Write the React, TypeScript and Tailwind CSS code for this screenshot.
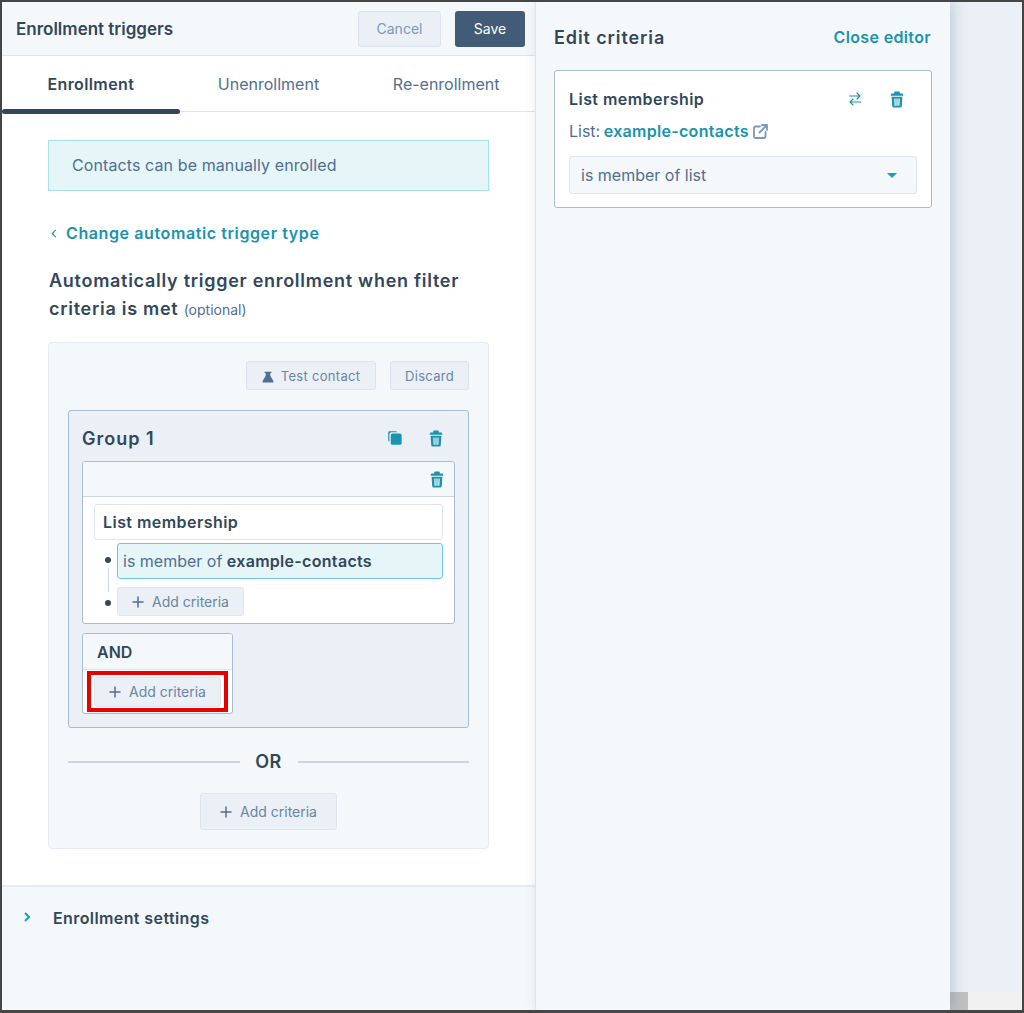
import React from 'react';

const font = { fontFamily: 'Inter' };

function TrashIcon({ className }: { className?: string }) {
  return (
    <svg viewBox="0 0 14 17" className={className} fill="currentColor">
      <path d="M5.200 0.400h3.600a1 1 0 0 1 1 1V2.400h2.400a1 1 0 0 1 1 1V4.800H0.800V3.400a1 1 0 0 1 1-1h2.400V1.400a1 1 0 0 1 1-1z" />
      <path fillRule="evenodd" d="M1.600 5.800h10.800l-0.600 9.300A1.600 1.600 0 0 1 10.200 16.600H3.800A1.600 1.600 0 0 1 2.200 15.100zM4.300 7.400l0.300 7.400h1.200L5.500 7.400zM6.400 7.400v7.400h1.200V7.400zM8.500 7.400l-0.300 7.400h1.200l0.300-7.400z" />
    </svg>
  );
}

function CopyIcon({ className }: { className?: string }) {
  return (
    <svg viewBox="0 0 14 14" className={className} fill="currentColor">
      <path d="M1.600 0.200h6.200a1.200 1.200 0 0 1 1.200 1.100H3.400A2 2 0 0 0 1.400 3.300v7.200A1.300 1.300 0 0 1 0.200 9.200V1.600A1.400 1.400 0 0 1 1.600 0.200z" />
      <rect x="2.800" y="2.400" width="10.800" height="11.400" rx="1.600" />
    </svg>
  );
}

function SwapIcon({ className }: { className?: string }) {
  return (
    <svg viewBox="0 0 14 14" className={className} fill="none" stroke="currentColor" strokeWidth="1.100" strokeLinecap="round" strokeLinejoin="round">
      <path d="M1.500 4h10.500M9 1l3 3-3 3" />
      <path d="M12.500 10H2M5 7l-3 3 3 3" />
    </svg>
  );
}

function ExternalIcon({ className }: { className?: string }) {
  return (
    <svg viewBox="0 0 15 15" className={className} fill="none" stroke="currentColor" strokeWidth="1.800" strokeLinecap="round" strokeLinejoin="round">
      <path d="M7 2.500H2.500a1.500 1.500 0 0 0-1.500 1.500v8.500A1.500 1.500 0 0 0 2.500 14H11a1.500 1.500 0 0 0 1.500-1.500V8" />
      <path d="M9 1h5v5M14 1L6.500 8.500" />
    </svg>
  );
}

function FlaskIcon({ className }: { className?: string }) {
  return (
    <svg viewBox="0 0 12 12" className={className} fill="currentColor">
      <path d="M2.500 0.800h7v1.200H8.300v2.800l3.200 5.500a0.800 0.800 0 0 1-0.700 1.200H1.200a0.800 0.800 0 0 1-0.700-1.200l3.200-5.500V2H2.500z" />
    </svg>
  );
}

function PlusIcon({ className }: { className?: string }) {
  return (
    <svg viewBox="0 0 12 12" className={className} fill="none" stroke="currentColor" strokeWidth="1.500" strokeLinecap="round">
      <path d="M6 1v10M1 6h10" />
    </svg>
  );
}

function AddCriteria({ className }: { className: string }) {
  return (
    <button className={`flex items-center justify-center gap-2 rounded-[3px] border border-[#dfe5ec] bg-[#eaf0f6] text-sm text-[#6a85a3] ${className}`}>
      <PlusIcon className="h-3 w-3 text-[#516f90]" />
      Add criteria
    </button>
  );
}

export default function App() {
  return (
    <div style={font} className="flex h-[1013px] w-[1024px] border-t-2 border-r-2 border-b-[3px] border-l-2 border-[#454545] bg-[#eaf0f6] text-[#33475b]">
      {/* left panel */}
      <div className="flex w-[533px] flex-col bg-white">
        <div className="flex h-[54px] items-center border-b border-[#dfe3eb] bg-[#f5f8fa] pr-[10px] pl-[14px]">
          <h1 className="flex-1 pt-[2px] text-[17px] font-semibold">Enrollment triggers</h1>
          <button className="mr-[14px] h-9 w-[83px] rounded-[3px] border border-[#dbe3ec] bg-[#eaf0f6] text-sm text-[#7c98b6]">Cancel</button>
          <button className="h-9 w-[70px] rounded-[3px] bg-[#425b76] text-sm text-white">Save</button>
        </div>

        <div className="grid h-[56px] grid-cols-3 border-b border-[#dfe3eb] text-base">
          <div className="relative flex items-center justify-center font-semibold tracking-[0.4px]">
            Enrollment
            <span className="absolute top-[53px] left-0 h-[5px] w-[178px] rounded-full bg-[#33475b]" />
          </div>
          <div className="flex items-center justify-center text-[#516f90]">Unenrollment</div>
          <div className="flex items-center justify-center text-[#516f90]">Re-enrollment</div>
        </div>

        <div className="flex-1 pt-7 pl-[46px]">
          <div className="flex h-[51px] w-[441px] items-center border border-[#a8e0e8] bg-[#e5f5f8] pb-px pl-[23px] text-base tracking-[0.1px] text-[#516f90]">
            Contacts can be manually enrolled
          </div>
          <div className="mt-[32px] flex items-center pl-[3px] text-base leading-5 font-semibold tracking-[0.6px] text-[#1a93ad]">
            <svg viewBox="0 0 6 10" className="mr-[9px] h-[9px] w-[6px]" fill="none" stroke="currentColor" strokeWidth="1.300">
              <path d="M5 1L1 5l4 4" />
            </svg>
            Change automatic trigger type
          </div>
          <h2 className="mt-[24px] ml-px w-[430px] text-lg leading-7 font-semibold tracking-[0.72px]">
            Automatically trigger enrollment when filter criteria is met{' '}
            <span className="text-sm font-normal tracking-[0px] text-[#516f90]">(optional)</span>
          </h2>

          <div className="mt-[19px] h-[507px] w-[441px] rounded-[4px] border border-[#e5ebf1] bg-[#f5f8fa] px-[19px] pt-[18px]">
            <div className="flex justify-end gap-[14px]">
              <button className="flex h-[29px] w-[130px] items-center justify-center gap-[7px] rounded-[3px] border border-[#dbe3ec] bg-[#eaf0f6] pt-[2px] text-[13px] tracking-[0.3px] text-[#6a85a3]">
                <FlaskIcon className="h-3 w-3 text-[#516f90]" />
                Test contact
              </button>
              <button className="h-[29px] w-[79px] rounded-[3px] border border-[#dbe3ec] bg-[#eaf0f6] pt-[2px] text-[13px] tracking-[0.3px] text-[#6a85a3]">Discard</button>
            </div>

            <div className="mt-5 h-[318px] rounded-[3px] border border-[#a9bccf] bg-[#eaf0f6] px-[13px]">
              <div className="flex h-[50px] items-center">
                <span className="flex-1 pt-[6px] text-lg font-semibold tracking-[1px]">Group 1</span>
                <CopyIcon className="mt-[4px] mr-[27px] h-[14px] w-[14px] text-[#1a93ad]" />
                <TrashIcon className="mt-[4px] mr-[12px] h-[17px] w-[14px] text-[#1a93ad]" />
              </div>
              <div className="h-[163px] overflow-hidden rounded-[3px] border border-[#a9bccf] bg-white">
                <div className="flex h-[35px] items-center justify-end border-b border-[#cbd6e2] bg-[#f5f8fa] pr-[10px]">
                  <TrashIcon className="h-[17px] w-[14px] text-[#1a93ad]" />
                </div>
                <div className="px-[11px] pt-[7px]">
                  <div className="flex h-9 items-center rounded-[3px] border border-[#dfe3eb] pl-2 text-base font-semibold tracking-[0.45px]">List membership</div>
                  <div className="mt-[3px] flex">
                    <div className="flex w-[23px] flex-col items-center pt-[14px] pl-[5px]">
                      <span className="h-[6px] w-[6px] rounded-full bg-[#33475b]" />
                      <span className="mt-[5px] mb-[8px] h-6 w-px bg-[#cbd6e2]" />
                      <span className="h-[6px] w-[6px] rounded-full bg-[#33475b]" />
                    </div>
                    <div className="flex-1">
                      <div className="flex h-9 items-center rounded-[3px] border border-[#6ec8da] bg-[#e5f5f8] pl-[5px] text-base text-[#516f90]">
                        is member of&nbsp;<b className="font-semibold tracking-[0.3px] text-[#33475b]">example-contacts</b>
                      </div>
                      <AddCriteria className="mt-2 h-[29px] w-[127px]" />
                    </div>
                  </div>
                </div>
              </div>

              <div className="mt-[9px] h-[81px] w-[151px] overflow-hidden rounded-[3px] border border-[#a9bccf] bg-white">
                <div className="flex h-[36px] items-center border-b border-[#dfe3eb] bg-[#f5f8fa] pl-[14px] text-base font-semibold">AND</div>
                <div className="mt-px ml-1 h-[41px] w-[141px] border-4 border-[#e60000] px-[3px] pt-[2px]">
                  <AddCriteria className="h-[30px] w-[127px]" />
                </div>
              </div>
            </div>

            <div className="mt-5 flex items-center">
              <span className="h-0.5 flex-1 bg-[#cbd6e2]" />
              <span className="w-[58px] text-center text-lg font-semibold tracking-[0.4px]">OR</span>
              <span className="h-0.5 flex-1 bg-[#cbd6e2]" />
            </div>
            <div className="mt-[17px] flex justify-center">
              <AddCriteria className="h-[37px] w-[137px]" />
            </div>
          </div>
        </div>

        <div className="mt-[36px] flex h-[125px] items-start border-t-2 border-[#e5ebf1] bg-[#f5f8fa] pt-[19px] pl-[22px]">
          <svg viewBox="0 0 7 10" className="mt-[6px] mr-[22px] h-[10px] w-[7px]" fill="none" stroke="#1a9fb8" strokeWidth="2">
            <path d="M1 1l4 4-4 4" />
          </svg>
          <span className="text-base font-semibold tracking-[0.4px]">Enrollment settings</span>
        </div>
      </div>

      {/* right panel */}
      <div className="relative w-[415px] border-l border-[#dfe3eb] bg-[#f5f8fa] px-[18px] pt-[22px] shadow-[4px_0_12px_rgba(80,100,130,0.25)]">
        <div className="flex items-center justify-between pr-[1px]">
          <h2 className="text-lg font-semibold tracking-[0.9px]">Edit criteria</h2>
          <span className="mb-[2px] text-base font-semibold tracking-[0.35px] text-[#1a93ad]">Close editor</span>
        </div>
        <div className="mt-[18px] h-[138px] w-[378px] rounded-[3px] border border-[#a9bccf] bg-white px-[14px] pt-[16px]">
          <div className="flex items-center">
            <span className="flex-1 text-base font-semibold tracking-[0.45px]">List membership</span>
            <SwapIcon className="mr-[28px] h-[14px] w-[14px] text-[#1a93ad]" />
            <TrashIcon className="mr-[13px] h-[17px] w-[14px] text-[#1a93ad]" />
          </div>
          <div className="mt-[8px] flex items-center text-base text-[#516f90]">
            List:&nbsp;<span className="-ml-px font-semibold tracking-[0.3px] text-[#1a93ad]">example-contacts</span>
            <ExternalIcon className="ml-[4px] h-[15px] w-[15px] text-[#7c98b6]" />
          </div>
          <div className="mt-[13px] flex h-[38px] w-[348px] items-center justify-between rounded-[3px] border border-[#e0e6ed] bg-[#f5f8fa] pr-[19px] pl-[11px] text-base text-[#516f90]">
            is member of list
            <span className="h-0 w-0 border-x-[5px] border-t-[5px] border-x-transparent border-t-[#1a9fb8]" />
          </div>
        </div>
      </div>

      {/* page background with horizontal scrollbar */}
      <div className="flex flex-1 flex-col justify-end">
        <div className="flex h-[18px] bg-[#f1f1f1]">
          <span className="h-full w-[18px] bg-[#c1c1c1]" />
        </div>
      </div>
    </div>
  );
}
